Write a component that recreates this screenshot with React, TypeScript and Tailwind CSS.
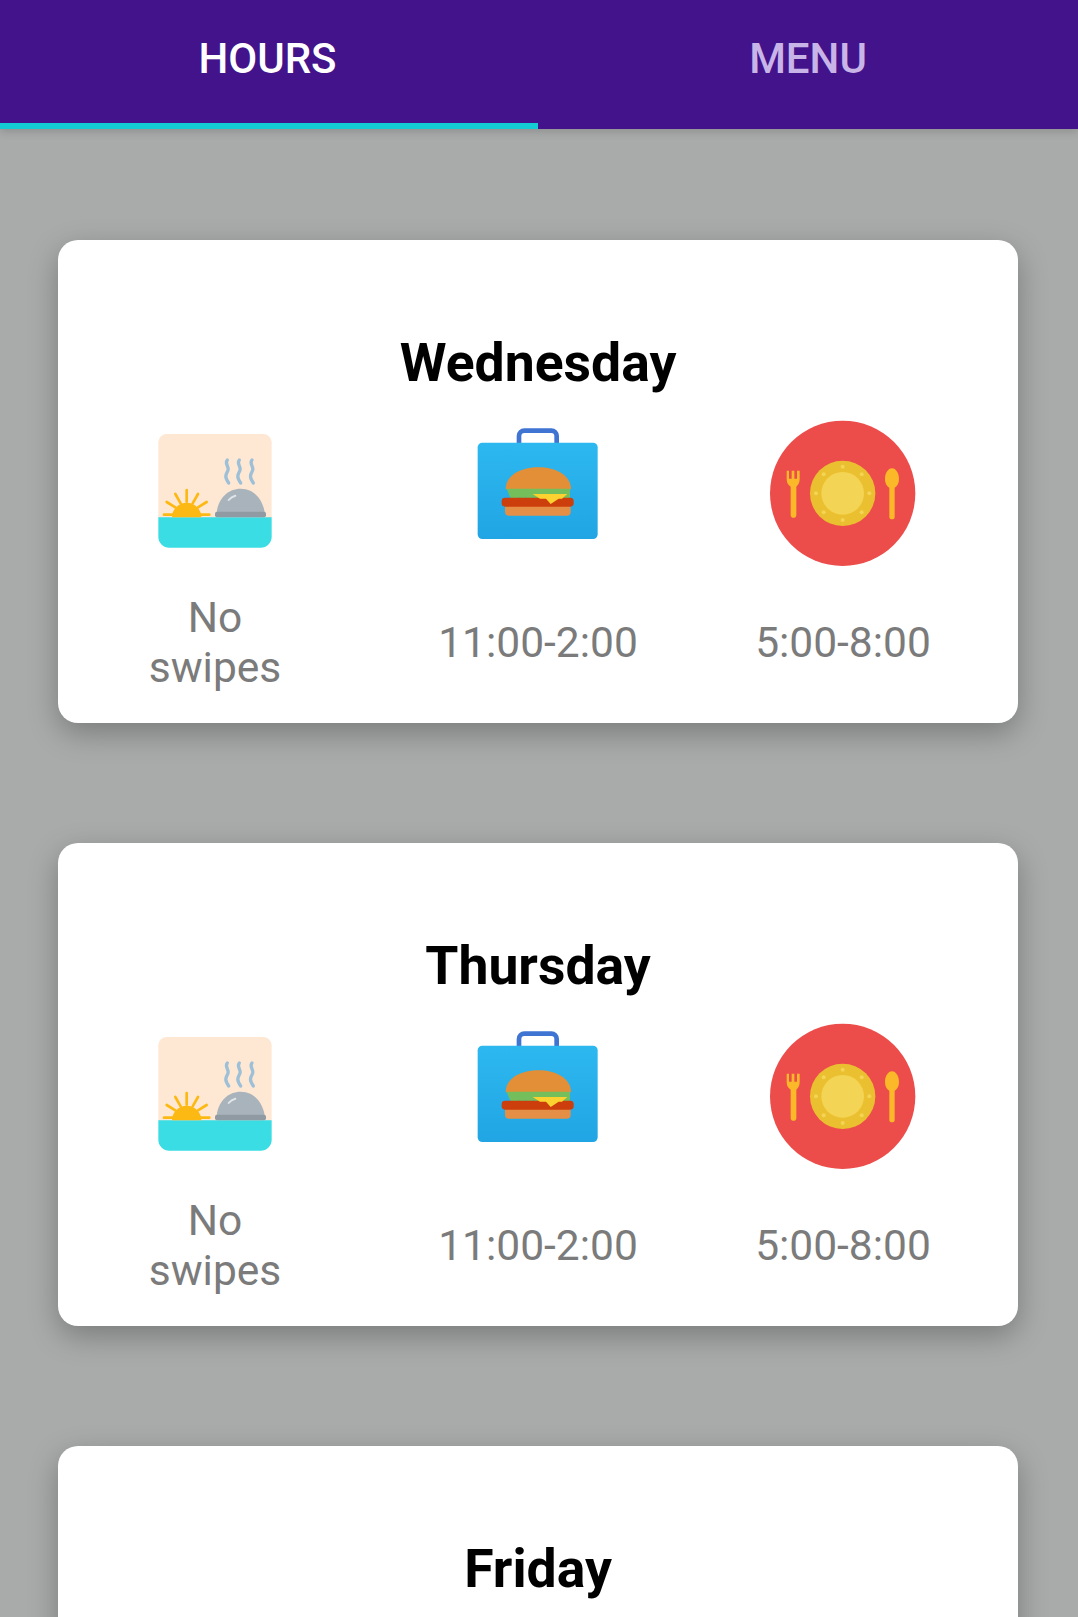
const days = [
  { name: "Wednesday", showHours: true },
  { name: "Thursday", showHours: true },
  { name: "Friday", showHours: false },
];

function BreakfastIcon() {
  return (
    <svg width="170" height="170" viewBox="0 0 510 510" className="blur-[0.5px]">
      <path d="M110 72H400a25 25 0 0 1 25 25V325H85V97a25 25 0 0 1 25-25Z" fill="#fee8d3" />
      <path d="M85 322H425V380a33 33 0 0 1-33 33H118a33 33 0 0 1-33-33Z" fill="#3addE4" />
      <g fill="none" stroke="#9dc0d8" strokeWidth="10" strokeLinecap="round">
        <path d="M292 150c-10 12 8 20 1 33s-9 18 3 36" />
        <path d="M328 150c-10 12 8 20 1 33s-9 18 3 36" />
        <path d="M366 150c-10 12 8 20 1 33s-9 18 3 36" />
      </g>
      <g stroke="#fdb913" strokeWidth="8" strokeLinecap="round">
        <path d="M170 240V275" />
        <path d="M136 252L152 280" />
        <path d="M204 252L188 280" />
        <path d="M110 276L136 292" />
        <path d="M230 276L204 292" />
        <path d="M102 314H238" />
      </g>
      <path d="M126 322a44 44 0 0 1 88 0Z" fill="#fdb913" />
      <path d="M260 306c6-44 36-70 72-70s64 26 72 70Z" fill="#a9b3bb" />
      <path d="M296 270q8-10 20-13" stroke="#dfe5e9" strokeWidth="6" fill="none" strokeLinecap="round" />
      <rect x="255" y="305" width="153" height="17" rx="6" fill="#8f9aa3" />
    </svg>
  );
}

function LunchIcon() {
  return (
    <svg width="170" height="170" viewBox="9 0 510 510" className="blur-[0.5px]">
      <defs>
        <linearGradient id="lunchBody" x1="0" y1="0" x2="0" y2="1">
          <stop offset="0" stopColor="#2db8f0" />
          <stop offset="1" stopColor="#21a5e4" />
        </linearGradient>
      </defs>
      <path d="M207 100V78a16 16 0 0 1 16-16H304a16 16 0 0 1 16 16V100" fill="none" stroke="#3f74d3" strokeWidth="14" />
      <rect x="83" y="98" width="360" height="289" rx="14" fill="url(#lunchBody)" />
      <path d="M167 238c0-42 45-66 98-66s98 24 98 66Z" fill="#e38f38" />
      <path d="M170 236H360V262c-8 6-14 6-22 0c-8 6-14 6-22 0c-8 6-14 6-22 0c-8 6-14 6-22 0c-8 6-14 6-22 0c-8 6-14 6-22 0c-8 6-14 6-22 0c-8 6-14 6-26 0Z" fill="#74bf5c" />
      <path d="M165 288H362V305a12 12 0 0 1-12 12H177a12 12 0 0 1-12-12Z" fill="#e58e45" />
      <rect x="155" y="263" width="216" height="27" rx="10" fill="#cc3f0c" />
      <path d="M248 252H352L336 266H326L302 282L288 266H270Z" fill="#fbd22f" />
    </svg>
  );
}

function DinnerIcon() {
  return (
    <svg width="170" height="170" viewBox="-6 0 510 510" className="blur-[0.5px]">
      <circle cx="248" cy="250" r="218" fill="#ec4d4a" />
      <circle cx="248" cy="250" r="98" fill="#ebc030" />
      <circle cx="248" cy="250" r="64" fill="#f4d455" />
      <g fill="#f4d455">
        <circle cx="248" cy="170" r="6" />
        <circle cx="248" cy="330" r="6" />
        <circle cx="168" cy="250" r="6" />
        <circle cx="328" cy="250" r="6" />
        <circle cx="191" cy="193" r="6" />
        <circle cx="305" cy="193" r="6" />
        <circle cx="191" cy="307" r="6" />
        <circle cx="305" cy="307" r="6" />
      </g>
      <path d="M80 182h7v24h8v-24h8v24h8v-24h8v26c0 12-6 19-10 22v85a8 8 0 0 1-17 0v-85c-6-3-12-10-12-22Z" fill="#fbb829" />
      <path d="M396 175c12 0 21 15 21 32 0 14-7 23-13 26v87a8 8 0 0 1-16 0v-87c-6-3-13-12-13-26 0-17 9-32 21-32Z" fill="#fbb829" />
    </svg>
  );
}

function DayCard({ name, showHours }: { name: string; showHours: boolean }) {
  return (
    <div className="mb-[120px] h-[483px] shrink-0 overflow-hidden rounded-[20px] bg-white pt-[95px] shadow-[0_10px_30px_rgba(0,0,0,0.28)]">
      <h2 className="mb-[19px] text-center text-[53.5px] leading-[56px] font-bold text-black">{name}</h2>
      {showHours && (
        <div className="grid grid-cols-[314px_332px_278px] text-[42.5px] leading-[50px] text-[#7b7b7b]">
          <div className="flex flex-col items-center">
            <BreakfastIcon />
            <div className="mt-[13px] flex h-[100px] w-[170px] items-center justify-center text-center">No swipes</div>
          </div>
          <div className="flex flex-col items-center">
            <LunchIcon />
            <div className="mt-[13px] flex h-[100px] items-center text-center">11:00-2:00</div>
          </div>
          <div className="flex flex-col items-center">
            <DinnerIcon />
            <div className="mt-[13px] flex h-[100px] items-center text-center">5:00-8:00</div>
          </div>
        </div>
      )}
    </div>
  );
}

export default function App() {
  return (
    <div className="flex h-[1617px] flex-col overflow-hidden bg-[#a9abaa] font-['Roboto',sans-serif]">
      <div className="flex h-[129px] shrink-0 bg-[#42138a] shadow-[0_3px_8px_rgba(0,0,0,0.15)]">
        <div className="flex w-[538px] items-center justify-center border-b-[6px] border-[#14cdd4] pr-[3px] pb-[6px] text-[42px] font-medium text-white">
          HOURS
        </div>
        <div className="flex flex-1 items-center justify-center border-b-[6px] border-transparent pb-[6px] text-[42px] font-medium text-[#c9b4e8]">
          MENU
        </div>
      </div>
      <div className="flex flex-col pt-[111px] pr-[60px] pl-[58px]">
        {days.map((day) => (
          <DayCard key={day.name} name={day.name} showHours={day.showHours} />
        ))}
      </div>
    </div>
  );
}
